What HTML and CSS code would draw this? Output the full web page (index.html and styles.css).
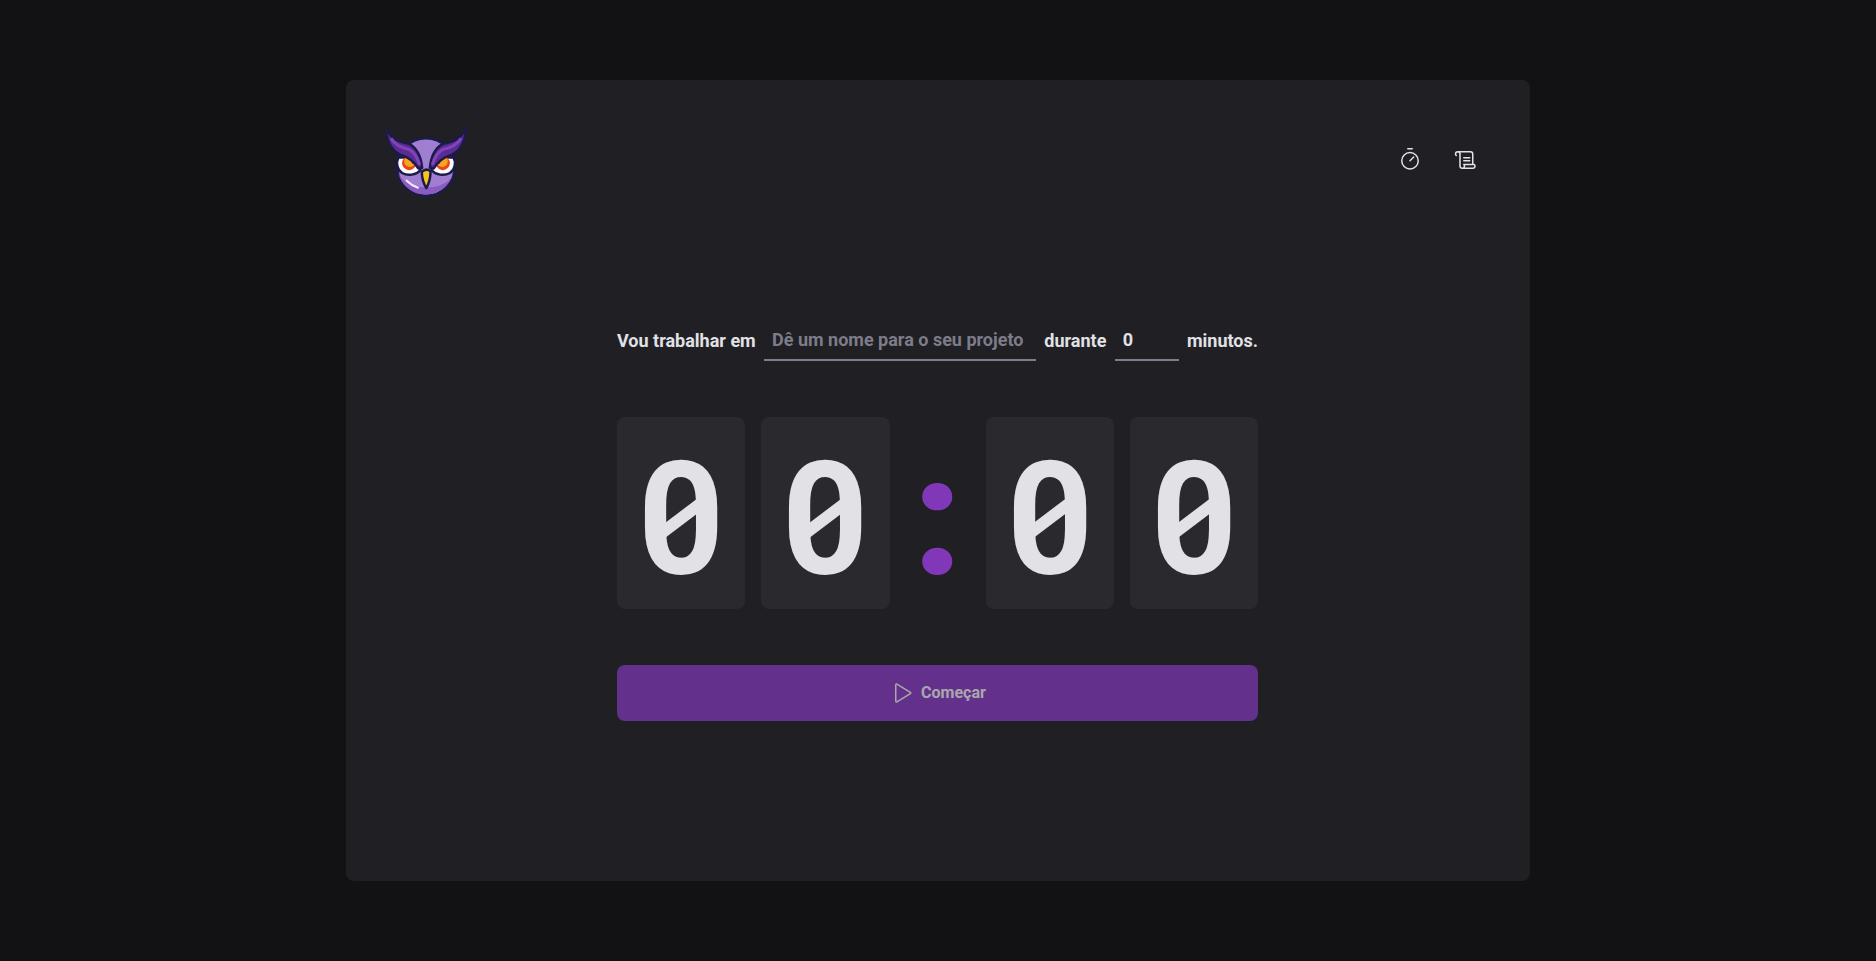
FILE: index.html
```html
<!DOCTYPE html>
<html lang="pt-BR">
<head>
<meta charset="utf-8">
<title>Timer</title>
<link rel="stylesheet" href="styles.css">
</head>
<body>
<div class="card">
  <header class="header">
    <svg class="logo" viewBox="54 32 228 228" aria-label="Logo">
      <defs>
        <g id="owl-eye">
          <path d="M90 138c-9 16 -4 36 10 45c16 9 40 6 52 -8l-4 -34z" fill="#fff" stroke="#1b1a4a" stroke-width="7" stroke-linejoin="round"/>
          <circle cx="120" cy="155" r="20" fill="#e8441f"/>
          <circle cx="122" cy="150" r="16" fill="#f9a51a"/>
          <circle cx="132" cy="153" r="4" fill="#1b1a4a"/>
        </g>
        <g id="owl-wing">
          <path d="M53 46C58 76 80 94 120 100C142 112 154 136 157 168L146 170C132 146 112 136 92 130C68 116 54 85 53 46z" fill="#5b2a92" stroke="#1b1a4a" stroke-width="7" stroke-linejoin="round"/>
          <path d="M68 84C80 104 100 112 120 116C134 124 144 140 150 160" fill="none" stroke="#7d45b8" stroke-width="9"/>
        </g>
      </defs>
      <circle cx="168" cy="166" r="82" fill="#a07fd2" stroke="#1b1a4a" stroke-width="7"/>
      <path d="M89 182c8 36 40 62 79 62c37 0 67 -24 77 -58c-12 28 -41 38 -77 38c-35 0 -67 -14 -79 -42z" fill="#8a5cc0"/>
      <use href="#owl-eye"/>
      <use href="#owl-eye" transform="matrix(-1 0 0 1 336 0)"/>
      <use href="#owl-wing"/>
      <use href="#owl-wing" transform="matrix(-1 0 0 1 336 0)"/>
      <path d="M156 180q12 -12 25 -2q0 26 -12 48q-13 -22 -13 -46z" fill="#f5c518" stroke="#1b1a4a" stroke-width="7" stroke-linejoin="round"/>
      <path d="M113 205q14 14 32 20" fill="none" stroke="#f3e9ff" stroke-width="6" stroke-linecap="round"/>
    </svg>
    <nav class="nav">
      <a class="nav-link" href="#">
        <svg class="icon" viewBox="0 0 256 256"><circle cx="128" cy="136" r="88" fill="none" stroke="currentColor" stroke-width="16"/><path d="M128 136l39.6-39.6M104 8h48" fill="none" stroke="currentColor" stroke-width="16" stroke-linecap="round"/></svg>
      </a>
      <a class="nav-link" href="#">
        <svg class="icon" viewBox="0 0 256 256"><path fill="currentColor" d="M96,104a8,8,0,0,1,8-8h64a8,8,0,0,1,0,16H104A8,8,0,0,1,96,104Zm8,40h64a8,8,0,0,0,0-16H104a8,8,0,0,0,0,16Zm128,48a32,32,0,0,1-32,32H88a32,32,0,0,1-32-32V64a16,16,0,0,0-32,0c0,5.74,4.83,9.62,4.88,9.66h0A8,8,0,0,1,24,88a7.89,7.89,0,0,1-4.79-1.61h0C18.05,85.54,8,77.61,8,64A32,32,0,0,1,40,32H176a32,32,0,0,1,32,32V168h8a8,8,0,0,1,4.8,1.6C222,170.46,232,178.39,232,192ZM96.26,173.48A8.07,8.07,0,0,1,104,168h88V64a16,16,0,0,0-16-16H67.69A31.71,31.71,0,0,1,72,64V192a16,16,0,0,0,32,0c0-5.74-4.83-9.62-4.88-9.66A7.82,7.82,0,0,1,96.26,173.48ZM216,192a12.58,12.58,0,0,0-3.23-8h-94a26.92,26.92,0,0,1,1.21,8,31.82,31.82,0,0,1-4.29,16H200A16,16,0,0,0,216,192Z"/></svg>
      </a>
    </nav>
  </header>
  <main class="main">
    <form class="content">
      <div class="form-row">
        <label for="task">Vou trabalhar em</label>
        <input id="task" class="input input-task" type="text" placeholder="Dê um nome para o seu projeto">
        <label for="minutes">durante</label>
        <input id="minutes" class="input input-minutes" type="number" value="0">
        <span>minutos.</span>
      </div>
      <div class="countdown">
        <div class="digit"><span class="glyph">0</span></div>
        <div class="digit"><span class="glyph">0</span></div>
        <span class="separator">:</span>
        <div class="digit"><span class="glyph">0</span></div>
        <div class="digit"><span class="glyph">0</span></div>
      </div>
      <button class="start" type="button" disabled>
        <svg class="icon" viewBox="0 0 256 256"><path fill="currentColor" d="M232.4,114.49,88.32,26.35a16,16,0,0,0-16.2-.3A15.86,15.86,0,0,0,64,39.87V216.13A15.94,15.94,0,0,0,80,232a16.07,16.07,0,0,0,8.36-2.35L232.4,141.51a15.81,15.81,0,0,0,0-27ZM80,215.94V40l143.83,88Z"/></svg>
        Começar
      </button>
    </form>
  </main>
</div>
</body>
</html>
```
FILE: styles.css
```css
* { box-sizing: border-box; margin: 0; padding: 0; }
html, body { height: 100%; }
body {
  display: flex;
  align-items: center;
  justify-content: center;
  overflow: hidden;
  background: #121214;
  color: #e1e1e6;
  font-family: Roboto, sans-serif;
  font-size: 16px;
}
.card {
  width: 1184px;
  height: 801px;
  padding: 40px;
  background: #202024;
  border-radius: 8px;
  display: flex;
  flex-direction: column;
}
.header {
  display: flex;
  align-items: center;
  justify-content: space-between;
}
.logo { width: 80px; height: 80px; display: block; }
.nav { display: flex; gap: 8px; }
.nav-link {
  width: 48px;
  height: 48px;
  display: flex;
  align-items: center;
  justify-content: center;
  color: #e1e1e6;
}
.icon { width: 24px; height: 24px; display: block; }
.main {
  flex: 1;
  display: flex;
  align-items: center;
  justify-content: center;
}
.content {
  width: 641px;
  margin-right: 1px;
  display: flex;
  flex-direction: column;
  gap: 56px;
}
.form-row {
  display: flex;
  align-items: center;
  justify-content: space-between;
  font-size: 18px;
  font-weight: 700;
  height: 40px;
}
.input {
  height: 40px;
  padding: 0 8px;
  background: transparent;
  border: 0;
  border-bottom: 2px solid #7c7c8a;
  color: #e1e1e6;
  font-family: Roboto, sans-serif;
  font-size: 18px;
  font-weight: 700;
  outline: none;
}
.input::placeholder { color: #7c7c8a; opacity: 1; }
.input-task { width: 272px; }
.input-minutes { width: 64px; appearance: textfield; }
.countdown {
  display: flex;
  gap: 16px;
  font-size: 158px;
  font-weight: 700;
}
.digit {
  position: relative;
  flex: 1;
  height: 192px;
  padding-top: 12px;
  background: #29292e;
  border-radius: 8px;
  text-align: center;
}
.glyph {
  display: block;
  line-height: 180px;
  transform: scaleX(0.95);
}
.digit::after {
  content: "";
  position: absolute;
  left: 42px;
  top: 77px;
  width: 45px;
  height: 49px;
  background: #e1e1e6;
  clip-path: polygon(0 34px, 45px 0, 45px 15px, 0 49px);
}
.separator {
  width: 64px;
  height: 192px;
  text-align: center;
  color: #8038b8;
  font-size: 165px;
  font-weight: 900;
  line-height: 202px;
}
.start {
  height: 56px;
  display: flex;
  align-items: center;
  justify-content: center;
  gap: 8px;
  border: 0;
  border-radius: 8px;
  background: #8038b8;
  color: #e1e1e6;
  font-family: Roboto, sans-serif;
  font-size: 16px;
  font-weight: 700;
  opacity: 0.7;
}
```
